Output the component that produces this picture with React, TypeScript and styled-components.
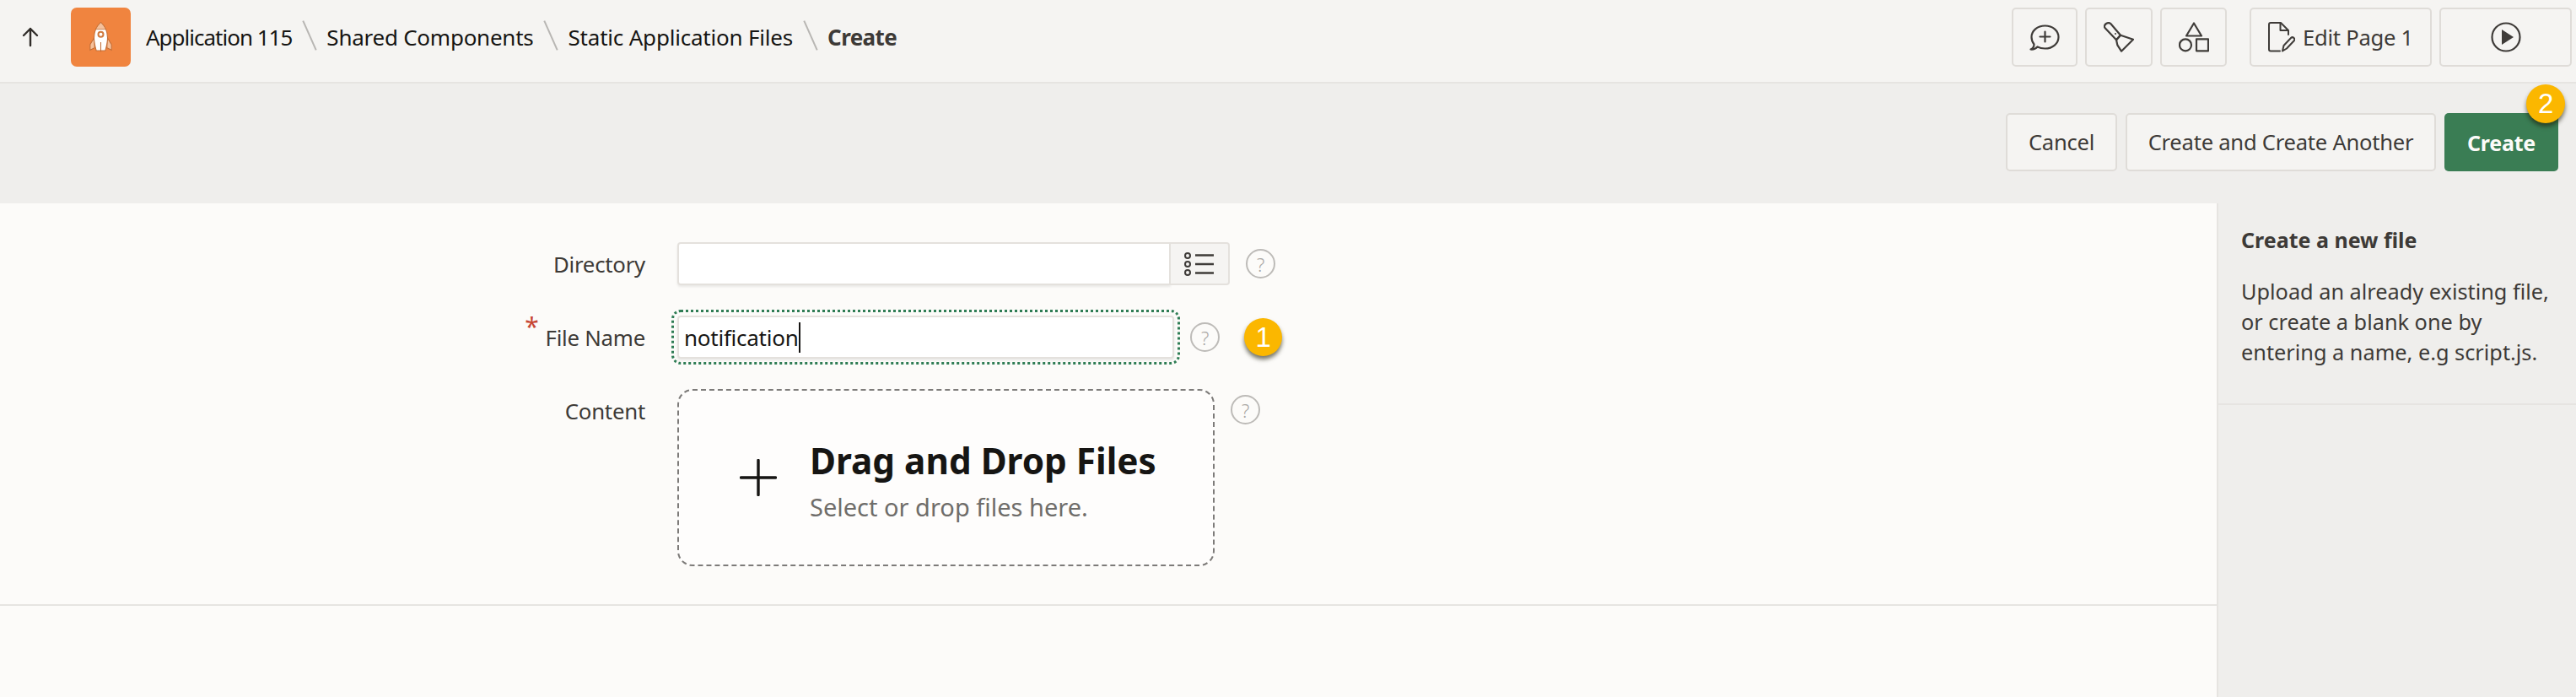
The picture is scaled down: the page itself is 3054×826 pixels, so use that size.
import React from 'react';
import styled, { createGlobalStyle } from 'styled-components';

const GlobalStyle = createGlobalStyle`
  html, body {
    margin: 0;
    padding: 0;
    background: #fcfbf9;
  }
  * {
    box-sizing: border-box;
  }
`;

const HelpIcon = () => (
  <HelpCircle>?</HelpCircle>
);

const RocketIcon = () => (
  <svg width="27" height="36" viewBox="0 0 40 54">
    <path d="M9 27 L1 40 L1 50 L9 46 Z" fill="#f5c19c" stroke="#c46e36" strokeWidth="1.6" />
    <path d="M31 27 L39 40 L39 50 L31 46 Z" fill="#f5c19c" stroke="#c46e36" strokeWidth="1.6" />
    <path d="M20 1 C12 8 8 18 8 28 C8 36 10 44 12 51 L28 51 C30 44 32 36 32 28 C32 18 28 8 20 1 Z" fill="#fff" stroke="#c46e36" strokeWidth="1.6" />
    <path d="M20 1 C16 5 13 9 11 13 L29 13 C27 9 24 5 20 1 Z" fill="#f5c19c" stroke="#c46e36" strokeWidth="1.2" />
    <circle cx="20" cy="22" r="4.5" fill="#fff" stroke="#d07a3f" strokeWidth="3" />
    <path d="M20 36 V53" stroke="#c46e36" strokeWidth="1.6" />
  </svg>
);

const ChatPlusIcon = () => (
  <svg width="36" height="31" viewBox="0 0 36 31" fill="none" stroke="#3f3c39" strokeWidth="2.2" strokeLinejoin="round" strokeLinecap="round">
    <path d="M1.500 29.500 C4 28.500 5.500 26.500 5.500 23.500 C3.500 21 2.500 18 2.500 15 C2.500 7.500 9.500 1.500 18.500 1.500 C27.500 1.500 34.500 7.500 34.500 15 C34.500 22.500 27.500 28.500 18.500 28.500 C15 28.500 12 27.800 9.500 26.500 C7.500 28.800 4.500 29.800 1.500 29.500 Z" />
    <path d="M18.500 8.500 V20.500 M12.500 14.500 H24.500" />
  </svg>
);

const FlashlightIcon = () => (
  <svg width="36" height="36" viewBox="0 0 36 36" fill="none" stroke="#3f3c39" strokeWidth="2.2" strokeLinejoin="round">
    <path d="M1.500 7 C0.500 5.500 1 3.500 3 2 C5 0.800 7 1 8.300 2 L20 15.700 L15 21.300 Z" />
    <path d="M20 15.700 L35 20.700 L21 34.700 L16.300 27.300 L15 21.300 Z" />
    <circle cx="14" cy="14" r="1" fill="#3f3c39" stroke="none" />
  </svg>
);

const ShapesIcon = () => (
  <svg width="36" height="36" viewBox="0 0 36 36" fill="none" stroke="#3f3c39" strokeWidth="2.2" strokeLinejoin="round">
    <path d="M18 1.500 L27 16.500 H9 Z" />
    <circle cx="8" cy="27.300" r="7" />
    <rect x="21" y="20.300" width="14" height="14" />
  </svg>
);

const PageEditIcon = () => (
  <svg width="32" height="36" viewBox="0 0 32 36" fill="none" stroke="#3f3c39" strokeWidth="2" strokeLinejoin="round" strokeLinecap="round">
    <path d="M14 34.500 H3 C2 34.500 1 33.500 1 32.500 V3 C1 2 2 1 3 1 H15 L24 10 V15" />
    <path d="M14.500 2 V10 H23" />
    <path d="M17 34.500 L18.500 28 L27 19 C28 18 29.500 18 30.500 19 C31.500 20 31.500 21.500 30.500 22.500 L22 31.500 Z" />
  </svg>
);

const PlayIcon = () => (
  <svg width="36" height="36" viewBox="0 0 36 36">
    <circle cx="18" cy="18" r="16.500" fill="none" stroke="#3f3c39" strokeWidth="2.2" />
    <path d="M13 9 L27 18 L13 27 Z" fill="#3f3c39" />
  </svg>
);

const ListIcon = () => (
  <svg width="36" height="28" viewBox="0 0 36 28" fill="none" stroke="#3f3c39">
    <circle cx="4" cy="4" r="3" strokeWidth="2" />
    <circle cx="4" cy="14" r="3" strokeWidth="2" />
    <circle cx="4" cy="24" r="3" strokeWidth="2" />
    <path d="M13 3.500 H35 M13 14 H35 M13 24.500 H35" strokeWidth="2.4" />
  </svg>
);

const UpArrowIcon = () => (
  <svg width="22" height="24" viewBox="0 0 22 24" fill="none" stroke="#312d2a" strokeWidth="2.4" strokeLinecap="round" strokeLinejoin="round">
    <path d="M11 22 V2 M3 10 L11 2 L19 10" />
  </svg>
);

const PlusIcon = () => (
  <svg width="44" height="44" viewBox="0 0 44 44" stroke="#161513" strokeWidth="3.4" strokeLinecap="round">
    <path d="M22 1.500 V42.500 M1.500 22 H42.500" />
  </svg>
);

const App = () => {
  return (
    <Page>
      <GlobalStyle />
      <Header>
        <UpButton>
          <UpArrowIcon />
        </UpButton>
        <Logo>
          <RocketIcon />
        </Logo>
        <Crumbs>
          <Crumb spacing={-1}>Application 115</Crumb>
          <Slash />
          <Crumb spacing={-0.25}>Shared Components</Crumb>
          <Slash />
          <Crumb spacing={-0.2}>Static Application Files</Crumb>
          <Slash />
          <Crumb spacing={-0.6} current>Create</Crumb>
        </Crumbs>
        <Tools>
          <ToolButton width={78}><ChatPlusIcon /></ToolButton>
          <ToolButton width={80}><FlashlightIcon /></ToolButton>
          <ToolButton width={79}><ShapesIcon /></ToolButton>
          <ToolButton width={216}>
            <PageEditIcon />
            Edit Page 1
          </ToolButton>
          <ToolButton width={157}><PlayIcon /></ToolButton>
        </Tools>
      </Header>
      <ActionBar>
        <ActionButton width={132}>Cancel</ActionButton>
        <ActionButton width={368}>Create and Create Another</ActionButton>
        <PrimaryButton>
          Create
          <TopBadge>2</TopBadge>
        </PrimaryButton>
      </ActionBar>
      <Body>
        <Main>
          <Form>
            <FieldLabel>Directory</FieldLabel>
            <FieldRow>
              <TextBox width={585} />
              <PickerButton><ListIcon /></PickerButton>
              <HelpIcon />
            </FieldRow>

            <FieldLabel required>File Name</FieldLabel>
            <FieldRow>
              <TextBox width={589} focused>
                notification
                <Caret />
              </TextBox>
              <HelpIcon />
              <StepBadge>1</StepBadge>
            </FieldRow>

            <FieldLabel>Content</FieldLabel>
            <FieldRow top>
              <DropZone>
                <PlusIcon />
                <DropText>
                  <DropTitle>Drag and Drop Files</DropTitle>
                  <DropHint>Select or drop files here.</DropHint>
                </DropText>
              </DropZone>
              <HelpIcon />
            </FieldRow>
          </Form>
        </Main>
        <Side>
          <SideCard>
            <SideTitle>Create a new file</SideTitle>
            <SideText>
              Upload an already existing file,
              <br />
              or create a blank one by
              <br />
              entering a name, e.g script.js.
            </SideText>
          </SideCard>
        </Side>
      </Body>
    </Page>
  );
};

export default App;

const Page = styled.div`
  width: 3054px;
  height: 826px;
  overflow: hidden;
  display: flex;
  flex-direction: column;
  background: #fcfbf9;
  color: #312d2a;
  font-family: 'Noto Sans', 'Open Sans', sans-serif;
  letter-spacing: -0.25px;
`;

const Header = styled.div`
  height: 99px;
  flex: none;
  display: flex;
  align-items: flex-start;
  padding: 9px 5px 0 0;
  background: #f5f4f2;
  border-bottom: 2px solid #e6e4e1;
`;

const UpButton = styled.div`
  width: 84px;
  height: 70px;
  display: flex;
  align-items: center;
  padding-left: 25px;
`;

const Logo = styled.div`
  width: 71px;
  height: 70px;
  display: flex;
  align-items: center;
  justify-content: center;
  background: #f0843f;
  border-radius: 7px;
`;

const Crumbs = styled.div`
  height: 70px;
  display: flex;
  align-items: center;
  margin-left: 18px;
  font-size: 26px;
`;

const Crumb = styled.span<{ current?: boolean; spacing: number }>`
  color: ${props => props.current ? '#3d3a37' : '#161513'};
  font-weight: ${props => props.current ? 700 : 400};
  letter-spacing: ${props => props.spacing}px;
  white-space: nowrap;
`;

const Slash = styled.span`
  width: 2px;
  height: 38px;
  margin: -4px 19.5px 0;
  background: #b8b6b3;
  transform: rotate(-24deg);
`;

const Tools = styled.div`
  margin-left: auto;
  display: flex;
`;

const ToolButton = styled.div<{ width: number }>`
  width: ${props => props.width}px;
  height: 70px;
  margin-left: 9px;
  display: flex;
  align-items: center;
  justify-content: center;
  gap: 9px;
  background: #f5f4f2;
  border: 2px solid #dfdcd8;
  border-radius: 5px;
  font-size: 25.6px;
  color: #3d3a37;
  &:nth-child(4) {
    margin-left: 27px;
  }
`;

const ActionBar = styled.div`
  height: 142px;
  flex: none;
  display: flex;
  justify-content: flex-end;
  gap: 10px;
  padding: 35px 21px 0 0;
  background: #efeeec;
`;

const ActionButton = styled.div<{ width: number }>`
  width: ${props => props.width}px;
  height: 69px;
  display: flex;
  align-items: center;
  justify-content: center;
  background: #f5f4f2;
  border: 2px solid #dfdcd8;
  border-radius: 5px;
  font-size: 25.6px;
  color: #3d3a37;
`;

const PrimaryButton = styled.div`
  position: relative;
  width: 135px;
  height: 69px;
  display: flex;
  align-items: center;
  justify-content: center;
  background: #3a7d54;
  border-radius: 5px;
  font-size: 25px;
  font-weight: 700;
  color: #fcfbf9;
`;

const TopBadge = styled.span`
  position: absolute;
  top: -34px;
  right: -8px;
  width: 46px;
  height: 46px;
  display: flex;
  align-items: center;
  justify-content: center;
  border-radius: 50%;
  background: #fbb700;
  box-shadow: 0 4px 5px rgba(30, 30, 10, 0.6);
  color: #fff;
  font-size: 33px;
  font-weight: 400;
  font-family: 'Liberation Sans', sans-serif;
`;

const Body = styled.div`
  flex: 1;
  display: flex;
`;

const Main = styled.div`
  width: 2630px;
  flex: none;
  background: #fcfbf9;
  border-right: 2px solid #e6e4e1;
`;

const Form = styled.div`
  display: grid;
  grid-template-columns: 765px auto;
  column-gap: 38px;
  row-gap: 36px;
  align-items: start;
  justify-content: start;
  padding: 46px 0 45px;
  width: 2628px;
  height: 477px;
  grid-auto-rows: max-content;
  border-bottom: 2px solid #e6e4e1;
`;

const FieldLabel = styled.label<{ required?: boolean }>`
  height: 51px;
  display: flex;
  align-items: center;
  justify-content: flex-end;
  font-size: 25.8px;
  color: #3d3a37;
  &::before {
    content: ${props => props.required ? "'*'" : 'none'};
    color: #c74634;
    font-size: 30px;
    line-height: 1;
    margin: -26px 8px 0 0;
  }
`;

const FieldRow = styled.div<{ top?: boolean }>`
  display: flex;
  align-items: ${props => props.top ? 'flex-start' : 'center'};
  & > span:first-of-type {
    margin-left: 19px;
    margin-top: ${props => props.top ? '7px' : '0'};
  }
`;

const TextBox = styled.div<{ width: number; focused?: boolean }>`
  width: ${props => props.width}px;
  height: 51px;
  display: flex;
  align-items: center;
  padding: 0 6px;
  background: #fff;
  border: 2px solid #e4e1dd;
  border-radius: 4px 0 0 4px;
  box-shadow: 0 2px 3px rgba(0, 0, 0, 0.08);
  font-size: 26px;
  color: #161513;
  ${props => props.focused ? `
    border-radius: 4px;
    outline: 3px dotted #2f7d55;
    outline-offset: 4px;
  ` : ''}
`;

const Caret = styled.i`
  width: 2px;
  height: 36px;
  background: #161513;
`;

const PickerButton = styled.div`
  width: 70px;
  height: 51px;
  display: flex;
  align-items: center;
  justify-content: center;
  background: #f5f4f2;
  border: 2px solid #e4e1dd;
  border-left: none;
  border-radius: 0 4px 4px 0;
`;

const HelpCircle = styled.span`
  width: 35px;
  height: 35px;
  display: flex;
  align-items: center;
  justify-content: center;
  border: 2px solid #bdbbb8;
  border-radius: 50%;
  font-size: 22px;
  font-weight: 300;
  color: #a9a7a4;
`;

const StepBadge = styled.span`
  width: 45px;
  height: 45px;
  margin-left: 29px;
  display: flex;
  align-items: center;
  justify-content: center;
  border-radius: 50%;
  background: #fbb700;
  box-shadow: 0 4px 5px rgba(30, 30, 10, 0.6);
  color: #fff;
  font-size: 33px;
  font-family: 'Liberation Sans', sans-serif;
`;

const DropZone = styled.div`
  width: 637px;
  height: 210px;
  display: flex;
  align-items: center;
  gap: 39px;
  padding-left: 72px;
  background: #fefdfc;
  border: 2px dashed #7d7b79;
  border-radius: 18px;
`;

const DropText = styled.div`
  display: flex;
  flex-direction: column;
  padding-top: 7px;
  letter-spacing: 0;
`;

const DropTitle = styled.div`
  font-size: 42.3px;
  font-weight: 700;
  line-height: 56px;
  color: #161513;
`;

const DropHint = styled.div`
  margin-top: 6px;
  font-size: 29px;
  line-height: 42px;
  color: #6f6d6a;
`;

const Side = styled.div`
  flex: 1;
  background: #efeeec;
`;

const SideCard = styled.div`
  height: 239px;
  padding: 25px 20px 0 27px;
  border-bottom: 2px solid #e6e4e1;
`;

const SideTitle = styled.div`
  font-size: 25px;
  font-weight: 700;
  line-height: 36px;
  letter-spacing: 0;
  color: #3d3a37;
`;

const SideText = styled.div`
  margin-top: 25px;
  font-size: 25.3px;
  line-height: 36px;
  letter-spacing: 0;
  color: #3d3a37;
`;
